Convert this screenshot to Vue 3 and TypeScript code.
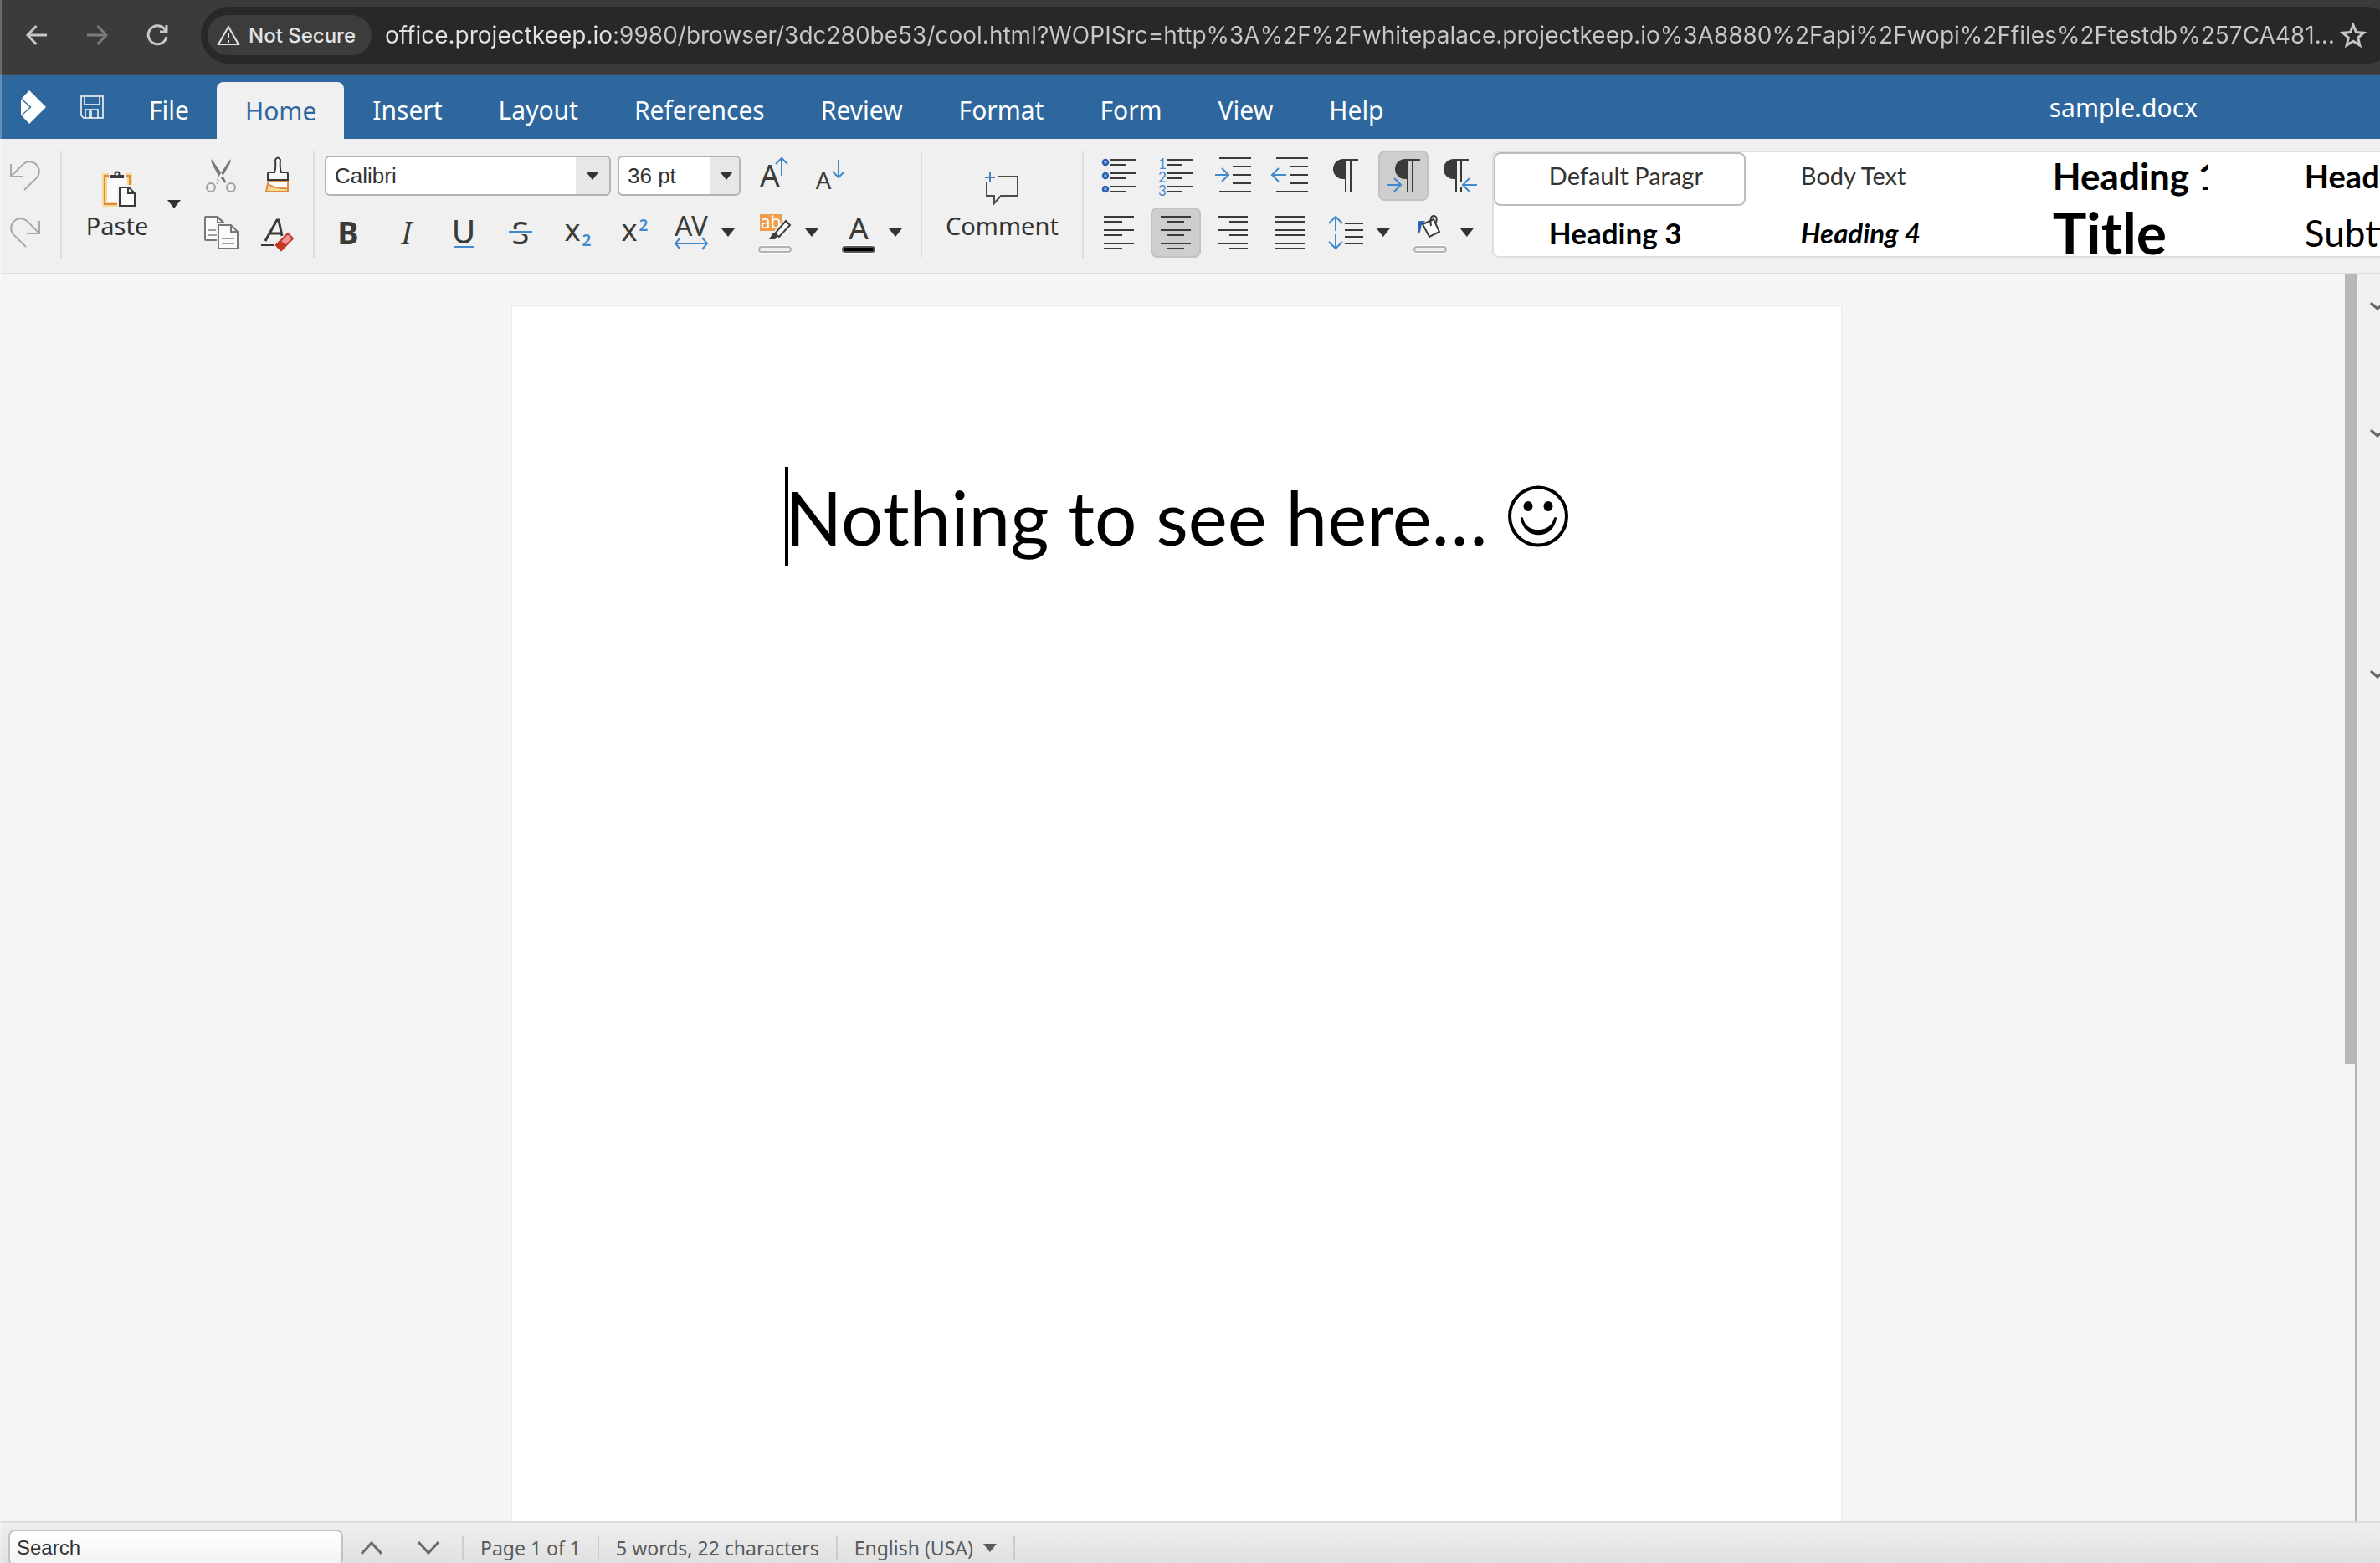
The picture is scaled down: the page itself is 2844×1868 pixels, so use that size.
<script setup lang="ts">
import { ref } from 'vue'

interface Tool {
  id: string
  label: string
  active?: boolean
  menu?: boolean
}

interface StylePreset {
  name: string
  kind: string
  selected?: boolean
}

const address = ref(
  'office.projectkeep.io:9980/browser/3dc280be53/cool.html?WOPISrc=http%3A%2F%2Fwhitepalace.projectkeep.io%3A8880%2Fapi%2Fwopi%2Ffiles%2Ftestdb%257CA481…'
)
const search = ref('')
const activeTab = ref('Home')

const tabs: string[] = ['File', 'Home', 'Insert', 'Layout', 'References', 'Review', 'Format', 'Form', 'View', 'Help']

const dark = 'stroke="#3a3a38" stroke-width="2"'
const blue = 'stroke="#4189cc" stroke-width="2"'
const pilcrow = (x: number): string =>
  `<path d="M${x + 16} 10H${x + 12}A12 12 0 0 0 ${x + 12} 34H${x + 16}Z" fill="#3a3a38"/>` +
  `<path d="M${x + 12} 11H${x + 30}M${x + 15} 11V50M${x + 21} 11V50" ${dark}/>`
const swatch = (fill: string, stroke: string): string =>
  `<rect x="9" y="45" width="42" height="10" rx="5" fill="#fff"/>` +
  `<rect x="11" y="47" width="38" height="6" rx="3" fill="${fill}" stroke="${stroke}" stroke-width="2"/>`

const icons: Record<string, string> = {
  undo: '<path d="M13 16V31H28M13 31L27.9 15.9A11.5 11.5 0 0 1 44.1 32.1L29 47" stroke="#a9a9a9" stroke-width="2"/>',
  redo: '<path d="M47 16V31H32M47 31L32.1 15.9A11.5 11.5 0 0 0 15.9 32.1L31 47" stroke="#a9a9a9" stroke-width="2"/>',
  cut: '<circle cx="18" cy="44" r="5" stroke="#a0a0a0" stroke-width="2"/><circle cx="42" cy="44" r="5" stroke="#a0a0a0" stroke-width="2"/><path d="M18 10L19 15L27 30L24 39L26 39L30 33L35 39L36 37L32 29L21 13Z M42 10L41 15L33 29L30 33L26 40L24 39L28 30L39 13Z" fill="#787878"/><circle cx="30" cy="30" r="1.5" fill="#f0f0f0"/>',
  brush: '<path d="M27 11Q30 6 33 11Q32 20 34 26H40Q42 26 42 28V35H18V28Q18 26 20 26H26Q28 20 27 11Z" fill="#fafafa" stroke="#3a3a38" stroke-width="2"/><path d="M17 35H43" stroke="#3a3a38" stroke-width="2"/><path d="M19 37H42V49H16Z" fill="#fff"/><path d="M18 40Q28 46 42 45V49H16Z" fill="#f3d991"/><path d="M18.500 37H42V49H16ZM18 40Q28 46 42 45" stroke="#e08b45" stroke-width="2"/>',
  copy: '<path d="M25 39H12Q11 39 11 38V12Q11 11 12 11H26L33 18H26V11" fill="#fafafa" stroke="#787878" stroke-width="2"/><path d="M15 27H25M15 33H25" stroke="#a0a0a0" stroke-width="2"/><path d="M24 19H43V30H24Z" fill="#f0f0f0"/><path d="M27 21H42L50 29V49H27Z" fill="#fafafa" stroke="#787878" stroke-width="2"/><path d="M42 21V29H50" stroke="#787878" stroke-width="2"/><path d="M31 37H46M31 43H46" stroke="#a0a0a0" stroke-width="2"/><path d="M11 11H26L33 18" stroke="#787878" stroke-width="2"/>',
  clear: '<path d="M15 40L29 15H31L35 34M20 31H34" stroke="#3a3a38" stroke-width="3"/><path d="M10 45H25" stroke="#3a3a38" stroke-width="2"/><path d="M42 31L48 37L34 51L28 45Z" fill="#f0949a" stroke="#c43825" stroke-width="2"/><path d="M33 40L39 46L34 51L28 45Z" fill="#c43825" stroke="#c43825" stroke-width="2"/>',
  grow: `<text x="27" y="44" text-anchor="middle" font-size="38" fill="#3a3a38">A</text><path d="M41 30V9M34 16L41 9L48 16" ${blue}/>`,
  shrink: `<text x="23" y="46" text-anchor="middle" font-size="29" fill="#3a3a38">A</text><path d="M41 11V32M34 25L41 32L48 25" ${blue}/>`,
  bold: '<text x="28" y="44" text-anchor="middle" font-size="38" font-weight="700" fill="#3a3a38">B</text>',
  italic: '<text x="30" y="44" text-anchor="middle" font-size="38" font-style="italic" fill="#3a3a38">I</text>',
  underline: `<text x="30" y="43" text-anchor="middle" font-size="38" style="font-family:Lato,sans-serif" fill="#3a3a38">U</text><path d="M18 47H42" ${blue}/>`,
  strike: `<text x="30" y="44" text-anchor="middle" font-size="38" fill="#3a3a38">S</text><path d="M16 29H44" stroke="#f0f0f0" stroke-width="6"/><path d="M16 29H44" ${blue}/>`,
  sub: '<text x="24" y="40" text-anchor="middle" font-size="36" fill="#3a3a38">x</text><text x="41" y="46" text-anchor="middle" font-size="19" font-weight="600" fill="#4189cc">2</text>',
  sup: '<text x="24" y="40" text-anchor="middle" font-size="36" fill="#3a3a38">x</text><text x="41" y="28" text-anchor="middle" font-size="19" font-weight="600" fill="#4189cc">2</text>',
  spacing: `<text x="30" y="34" text-anchor="middle" font-size="33" fill="#3a3a38">AV</text><path d="M11 43H49M17 36L11 43L17 50M43 36L49 43L43 50" ${blue}/>`,
  highlight: '<rect x="12" y="8" width="26" height="20" fill="#ef9d4f"/><text x="25" y="25" text-anchor="middle" font-size="21" fill="#fff">ab</text><path d="M43 16L49 21L36 36L30 31Z" fill="#fafafa" stroke="#f0f0f0" stroke-width="5"/><path d="M43 16L48 21L35 35L30 31Z" fill="#fafafa" stroke="#3a3a38" stroke-width="2"/><path d="M28 30L33 35L30 38L23 38Z" fill="#3a3a38"/>' + swatch('#f0f0f0', '#b3b3b3'),
  color: '<text x="30" y="38" text-anchor="middle" font-size="37" fill="#3a3a38">A</text>' + swatch('#000', '#555'),
  bullets: [14, 30, 46].map(y => `<circle cx="14" cy="${y}" r="3" fill="#8fb4e6" stroke="#2a5fb2" stroke-width="2.500"/><path d="M20 ${y - 3}H50M20 ${y + 3}H38" ${dark}/>`).join(''),
  numbers: [14, 30, 46].map((y, i) => `<text x="14" y="${y + 8}" text-anchor="middle" font-size="17" style="font-family:Lato,sans-serif" fill="#4189cc">${i + 1}</text><path d="M20 ${y - 3}H50M20 ${y + 3}H38" ${dark}/>`).join(''),
  indent: `<path d="M14 9H52M30 19H52M30 29H52M30 39H52M14 49H52" ${dark}/><path d="M9 29H26M17 21L25 29L17 37" ${blue}/>`,
  outdent: `<path d="M14 9H52M30 19H52M30 29H52M30 39H52M14 49H52" ${dark}/><path d="M8 29H26M17 21L9 29L17 37" ${blue}/>`,
  marks: pilcrow(14),
  ltr: pilcrow(20) + `<path d="M28 41L18 31V51Z" fill="#cecece"/><path d="M10 41H27M19 33L27 41L19 49" ${blue}/>`,
  rtl: pilcrow(10) + `<path d="M30 38H33V44H30Z" fill="#f0f0f0"/><path d="M33 41H50M41 33L33 41L41 49" ${blue}/>`,
  left: `<path d="M12 11H48M12 17H34M12 27H48M12 33H34M12 43H48M12 49H34" ${dark}/>`,
  center: `<path d="M12 11H48M20 17H40M12 27H48M20 33H40M12 43H48M20 49H40" ${dark}/>`,
  right: `<path d="M12 11H48M26 17H48M12 27H48M26 33H48M12 43H48M26 49H48" ${dark}/>`,
  justify: `<path d="M12 11H48M12 17H48M12 27H48M12 33H48M12 43H48M12 49H48" ${dark}/>`,
  lines: `<path d="M28 19H50M28 27H50M28 35H50M28 43H50" ${dark}/><path d="M17 28V11M9 19L17 11L25 19M17 32V49M9 41L17 49L25 41" ${blue}/>`,
  fill: '<path d="M15 33V19Q15 16 18 16H24L20 20L18 29Z" fill="#2a62b5"/><path d="M21 20L34 14L41 29L29 35Z" fill="#fafafa" stroke="#3a3a38" stroke-width="2"/><path d="M31 22Q29 9 35 10Q39 11 37 18" stroke="#3a3a38" stroke-width="2"/>' + swatch('#f0f0f0', '#b3b3b3')
}

const fontTools: Tool[] = [
  { id: 'bold', label: 'Bold' },
  { id: 'italic', label: 'Italic' },
  { id: 'underline', label: 'Underline' },
  { id: 'strike', label: 'Strikethrough' },
  { id: 'sub', label: 'Subscript' },
  { id: 'sup', label: 'Superscript' },
  { id: 'spacing', label: 'Character spacing', menu: true },
  { id: 'highlight', label: 'Highlighting', menu: true },
  { id: 'color', label: 'Font color', menu: true }
]
const sizeTools: Tool[] = [
  { id: 'grow', label: 'Increase size' },
  { id: 'shrink', label: 'Decrease size' }
]
const listTools: Tool[] = [
  { id: 'bullets', label: 'Bullets' },
  { id: 'numbers', label: 'Numbering' },
  { id: 'indent', label: 'Increase indent' },
  { id: 'outdent', label: 'Decrease indent' },
  { id: 'marks', label: 'Formatting marks' },
  { id: 'ltr', label: 'Left to right', active: true },
  { id: 'rtl', label: 'Right to left' }
]
const alignTools: Tool[] = [
  { id: 'left', label: 'Align left' },
  { id: 'center', label: 'Center', active: true },
  { id: 'right', label: 'Align right' },
  { id: 'justify', label: 'Justified' },
  { id: 'lines', label: 'Line spacing', menu: true },
  { id: 'fill', label: 'Paragraph background', menu: true }
]
const clipRows: Tool[][] = [
  [{ id: 'cut', label: 'Cut' }, { id: 'brush', label: 'Clone formatting' }],
  [{ id: 'copy', label: 'Copy' }, { id: 'clear', label: 'Clear formatting' }]
]
const historyRows: Tool[][] = [[{ id: 'undo', label: 'Undo' }], [{ id: 'redo', label: 'Redo' }]]
const paragraphRows: Tool[][] = [listTools, alignTools]

const presetRows: StylePreset[][] = [
  [
    { name: 'Default Paragraph', kind: 'plain', selected: true },
    { name: 'Body Text', kind: 'plain' },
    { name: 'Heading 1', kind: 'h1' },
    { name: 'Heading 2', kind: 'h2' }
  ],
  [
    { name: 'Heading 3', kind: 'h3' },
    { name: 'Heading 4', kind: 'h4' },
    { name: 'Title', kind: 'title' },
    { name: 'Subtitle', kind: 'subtitle' }
  ]
]
</script>

<template>
  <div class="window">
    <header class="browser">
      <button class="nav" aria-label="Back">
        <svg width="28" height="28" viewBox="0 0 28 28"><path d="M26 14H4M13.500 3L3 14L13.500 25" /></svg>
      </button>
      <button class="nav dim" aria-label="Forward">
        <svg width="28" height="28" viewBox="0 0 28 28"><path d="M2 14H24M14.500 3L25 14L14.500 25" /></svg>
      </button>
      <button class="nav" aria-label="Reload">
        <svg width="28" height="28" viewBox="0 0 28 28"><path d="M25 16A11 11 0 1 1 22 6L25 9M25 2V10H17" /></svg>
      </button>
      <div class="omnibox">
        <button class="secure">
          <svg width="28" height="26" viewBox="0 0 28 26"><path d="M14 3L26 24H2ZM14 10V17M14 19V22" /></svg>
          Not Secure
        </button>
        <input v-model="address" class="address" aria-label="Address" />
        <button class="star" aria-label="Bookmark">
          <svg width="32" height="32" viewBox="0 0 32 32"><path d="M16 4L19.500 12.500L28.500 13.200L21.700 19L23.800 28L16 23.200L8.200 28L10.300 19L3.500 13.200L12.500 12.500Z" /></svg>
        </button>
      </div>
    </header>

    <nav class="menubar">
      <a class="logo" href="#" aria-label="Start">
        <svg width="32" height="40" viewBox="0 0 32 40"><path d="M11 0L31 20L11 40L2 30.500L13.500 20L2 9.500ZM1 10.500L11.500 20L1 30Z" fill="#fff" /></svg>
      </a>
      <button class="save" aria-label="Save">
        <svg width="28" height="28" viewBox="0 0 28 28"><path d="M1 1H27V27H4L1 24ZM5 1V11H23V1M6 27V17H21V27M11 27V19H13V27" /></svg>
      </button>
      <div class="tabs" role="tablist">
        <button v-for="tab in tabs" :key="tab" role="tab" class="tab" :class="{ current: tab === activeTab }" :aria-selected="tab === activeTab" @click="activeTab = tab">{{ tab }}</button>
      </div>
      <span class="docname">sample.docx</span>
    </nav>

    <section class="ribbon">
      <div class="group">
        <div class="rows">
          <div v-for="(row, r) in historyRows" :key="r" class="row">
            <button v-for="t in row" :key="t.id" class="tool" :aria-label="t.label"><svg class="icon" viewBox="0 0 60 60" v-html="icons[t.id]" /></button>
          </div>
        </div>
      </div>
      <div class="group">
        <div class="paste">
          <button class="big">
            <svg class="bigicon" viewBox="0 0 48 48">
              <path d="M9 6H39V40H9Z" fill="#fafafa" stroke="#f3d991" stroke-width="6" />
              <path d="M9 6H39V40H9Z" stroke="#e08b45" stroke-width="2" />
              <path d="M14 3H34V9H14Z" fill="#f0f0f0" />
              <path d="M16 5H32V9H16Z" fill="#3a3a38" />
              <circle cx="24" cy="4" r="2.500" fill="#f0f0f0" stroke="#3a3a38" stroke-width="2" />
              <path d="M24 17H42V46H24Z" fill="#f0f0f0" />
              <path d="M27 20H38L45 27V42H27Z" fill="#fafafa" stroke="#3a3a38" stroke-width="2" />
              <path d="M37 20V27H45" stroke="#3a3a38" stroke-width="2" />
            </svg>
            Paste
          </button>
          <button class="drop" aria-label="Paste options"><i class="tri" /></button>
        </div>
        <div class="rows">
          <div v-for="(row, r) in clipRows" :key="r" class="row">
            <button v-for="t in row" :key="t.id" class="tool" :aria-label="t.label"><svg class="icon" viewBox="0 0 60 60" v-html="icons[t.id]" /></button>
          </div>
        </div>
      </div>
      <div class="group">
        <div class="rows">
          <div class="row">
            <span class="combo font">
              <select aria-label="Font name"><option>Calibri</option></select>
              <span class="combo-arrow"><i class="tri" /></span>
            </span>
            <span class="combo size">
              <select aria-label="Font size"><option>36 pt</option></select>
              <span class="combo-arrow"><i class="tri" /></span>
            </span>
            <button v-for="t in sizeTools" :key="t.id" class="tool" :aria-label="t.label"><svg class="icon" viewBox="0 0 60 60" v-html="icons[t.id]" /></button>
          </div>
          <div class="row">
            <div v-for="t in fontTools" :key="t.id" class="split">
              <button class="tool" :aria-label="t.label"><svg class="icon" viewBox="0 0 60 60" v-html="icons[t.id]" /></button>
              <button v-if="t.menu" class="drop" :aria-label="t.label + ' options'"><i class="tri" /></button>
            </div>
          </div>
        </div>
      </div>
      <div class="group">
        <button class="big">
          <svg class="bigicon" viewBox="0 0 48 48">
            <path d="M20 7H43V30H23L15 39V30H6V13" stroke="#4b4b4b" stroke-width="2" />
            <path d="M4 8H16M10 2V14" stroke="#4a7fc0" stroke-width="2" />
          </svg>
          Comment
        </button>
      </div>
      <div class="group last">
        <div class="rows">
          <div v-for="(row, r) in paragraphRows" :key="r" class="row">
            <div v-for="t in row" :key="t.id" class="split">
              <button class="tool" :class="{ active: t.active }" :aria-label="t.label"><svg class="icon" viewBox="0 0 60 60" v-html="icons[t.id]" /></button>
              <button v-if="t.menu" class="drop" :aria-label="t.label + ' options'"><i class="tri" /></button>
            </div>
          </div>
        </div>
      </div>
      <div class="presets">
        <div v-for="(row, r) in presetRows" :key="r" class="preset-row">
          <button v-for="p in row" :key="p.name" class="preset" :class="{ selected: p.selected }">
            <span class="preset-name" :class="p.kind">{{ p.name }}</span>
          </button>
        </div>
      </div>
    </section>

    <div class="workspace">
      <main class="canvas">
        <article class="page">
          <p class="line">
            <i class="caret" />
            <span>Nothing to see here…</span>
            <svg class="smiley" width="72" height="74" viewBox="0 0 72 74" role="img" aria-label="Smiling face">
              <ellipse cx="36" cy="37" rx="34" ry="34.500" stroke="#000" stroke-width="4" />
              <ellipse cx="24" cy="25" rx="5.500" ry="6" fill="#000" />
              <ellipse cx="48" cy="25" rx="5.500" ry="6" fill="#000" />
              <path d="M15 39Q16 37 18 39C21 58 51 58 55 39Q57 37 58 39C55 66 18 66 15 39Z" fill="#000" />
            </svg>
          </p>
        </article>
        <div class="track"><div class="thumb" /></div>
      </main>
      <aside class="sidebar">
        <button v-for="n in 3" :key="n" class="fold" :class="'fold-' + n" aria-label="Toggle panel">
          <svg width="20" height="12" viewBox="0 0 20 12"><path d="M2 2L10 9L18 2" /></svg>
        </button>
      </aside>
    </div>

    <footer class="statusbar">
      <input v-model="search" class="search" placeholder="Search" aria-label="Search" />
      <button class="step" aria-label="Previous"><svg width="28" height="20" viewBox="0 0 28 20"><path d="M2 17L14 4L26 17" /></svg></button>
      <button class="step" aria-label="Next"><svg width="28" height="20" viewBox="0 0 28 20"><path d="M2 3L14 16L26 3" /></svg></button>
      <span class="cell">Page 1 of 1</span>
      <span class="cell">5 words, 22 characters</span>
      <button class="cell lang">English (USA)<i class="tri" /></button>
      <span class="cell" />
    </footer>
  </div>
</template>

<style>
html,
body {
  overflow: hidden;
}
</style>

<style scoped>
.window {
  position: relative;
  display: flex;
  flex-direction: column;
  height: 100vh;
  overflow: hidden;
  background: #f5f5f5;
  color: #333;
  font-family: 'Noto Sans', sans-serif;
}
.window::before {
  content: '';
  position: absolute;
  inset: 0 auto 0 0;
  width: 2px;
  background: rgba(255, 255, 255, 0.25);
  z-index: 2;
}
* {
  box-sizing: border-box;
}
button {
  padding: 0;
  border: 0;
  background: none;
  color: inherit;
  font: inherit;
  cursor: pointer;
}
svg {
  display: block;
  fill: none;
}

/* Browser chrome */
.browser {
  display: flex;
  flex: none;
  align-items: flex-start;
  height: 90px;
  padding: 8px 0 0 30px;
  overflow: hidden;
  border-bottom: 2px solid #4a4a4a;
  background: #3b3b3b;
}
.nav {
  display: flex;
  align-items: center;
  height: 68px;
  margin-right: 44px;
}
.nav svg {
  stroke: #c7c7c7;
  stroke-width: 3;
}
.nav.dim svg {
  stroke: #7c7c7c;
}
.nav:nth-child(3) {
  margin-right: 38px;
}
.omnibox {
  display: flex;
  flex: 1;
  align-items: center;
  height: 68px;
  margin-right: -18px;
  padding: 0 34px 0 8px;
  border-radius: 34px;
  background: #282828;
}
.secure {
  display: flex;
  flex: none;
  align-items: center;
  gap: 10px;
  width: 196px;
  height: 48px;
  padding-left: 11px;
  border-radius: 24px;
  background: #3c3c3c;
  color: #e3e3e3;
  font: 500 24px Inter, sans-serif;
}
.secure svg {
  stroke: #e3e3e3;
  stroke-width: 2;
}
.address {
  flex: 1;
  min-width: 0;
  height: 48px;
  padding: 0;
  margin-left: 16px;
  border: 0;
  outline: 0;
  background: linear-gradient(90deg, #e3e3e3 271px, #c7c7c7 271px);
  background-clip: text;
  -webkit-text-fill-color: transparent;
  font: 28px Inter, sans-serif;
}
.star svg {
  stroke: #c7c7c7;
  stroke-width: 3;
}

/* Menu bar */
.menubar {
  display: flex;
  flex: none;
  align-items: center;
  height: 76px;
  padding: 0 218px 0 24px;
  background: #2e679e;
  color: #fff;
  font-size: 30px;
}
.save {
  margin: 0 20px 0 40px;
}
.save svg {
  stroke: #fff;
  stroke-width: 1.5;
}
.tabs {
  display: flex;
  align-self: flex-end;
  height: 68px;
}
.tab {
  padding: 0 33px 2px 34px;
  border-radius: 8px 8px 0 0;
}
.tab.current {
  padding-bottom: 0;
  background: #f0f0f0;
  color: #2e679e;
}
.docname {
  margin-left: auto;
}

/* Ribbon */
.ribbon {
  display: flex;
  flex: none;
  height: 162px;
  padding-top: 14px;
  overflow: hidden;
  border-bottom: 2px solid #dedede;
  background: #f0f0f0;
}
.group {
  display: flex;
  flex: none;
  gap: 8px;
  height: 128px;
  padding-right: 12px;
  margin-right: 12px;
  border-right: 2px solid #dcdcdc;
}
.group.last {
  margin-right: -4px;
  border-right: 0;
}
.rows {
  display: flex;
  flex-direction: column;
  gap: 8px;
}
.row {
  display: flex;
  align-items: center;
  gap: 8px;
  height: 60px;
}
.split,
.paste {
  display: flex;
}
.tool {
  width: 60px;
  height: 60px;
  border-radius: 8px;
}
.tool.active {
  background: #cecece;
  box-shadow: inset 0 0 0 2px #c2c2c2;
}
.icon {
  width: 60px;
  height: 60px;
  font-family: 'Noto Sans', sans-serif;
}
.drop {
  display: flex;
  align-items: center;
  width: 32px;
  padding-left: 6px;
}
.tri {
  display: block;
  width: 16px;
  height: 10px;
  background: #333;
  clip-path: polygon(0 0, 100% 0, 50% 100%);
}
.big {
  display: flex;
  flex-direction: column;
  align-items: center;
  min-width: 108px;
  padding: 24px 16px 0;
  font-size: 29px;
  line-height: 36px;
}
.bigicon {
  width: 48px;
  height: 48px;
}
.combo {
  position: relative;
  height: 48px;
}
.combo.font {
  width: 342px;
}
.combo.size {
  width: 147px;
}
.combo select {
  width: 100%;
  height: 100%;
  padding: 0 10px;
  border: 2px solid #b3b3b3;
  border-radius: 6px;
  outline: 0;
  background: #fff;
  color: #333;
  font: 26px 'Liberation Sans', sans-serif;
  appearance: none;
}
.combo-arrow {
  position: absolute;
  top: 2px;
  right: 2px;
  bottom: 2px;
  display: flex;
  align-items: center;
  justify-content: center;
  width: 40px;
  border-radius: 0 4px 4px 0;
  background: #e7e7e7;
  pointer-events: none;
}
.combo.size .combo-arrow {
  width: 34px;
  padding-left: 4px;
}

/* Paragraph style gallery */
.presets {
  flex: 1;
  min-width: 0;
  height: 128px;
  overflow: hidden;
  border: 2px solid #dedede;
  border-right: 0;
  border-radius: 8px 0 0 8px;
  background: #fff;
}
.preset-row {
  display: flex;
}
.preset {
  display: flex;
  flex: none;
  align-items: center;
  width: 301px;
  height: 64px;
  padding: 0 48px 8px 64px;
  border: 2px solid transparent;
  border-radius: 8px;
}
.preset-row + .preset-row .preset {
  padding-bottom: 0;
}
.preset.selected {
  border-color: #bcbcb9;
}
.preset-name {
  flex: 1;
  overflow: hidden;
  color: #000;
  font-family: Lato, sans-serif;
  line-height: 64px;
  text-align: left;
  white-space: nowrap;
}
.plain {
  color: #333;
  font-size: 29px;
}
.h1 {
  font-size: 44px;
  font-weight: 700;
}
.h2 {
  font-size: 38px;
  font-weight: 700;
}
.h3 {
  font-size: 35px;
  font-weight: 700;
}
.h4 {
  font-size: 33px;
  font-style: italic;
  font-weight: 700;
}
.title {
  font-size: 68px;
  font-weight: 700;
}
.subtitle {
  font-size: 44px;
}

/* Document area */
.workspace {
  display: flex;
  flex: 1;
  min-height: 0;
}
.canvas {
  position: relative;
  display: flex;
  flex: 1;
  justify-content: center;
  padding: 37px 4px 0 0;
}
.page {
  width: 1590px;
  max-width: 90%;
  padding-top: 192px;
  border: 1px solid #ebebeb;
  border-bottom: 0;
  background: #fff;
}
.line {
  display: flex;
  align-items: center;
  justify-content: center;
  height: 118px;
  margin: 0;
  color: #000;
  font: 89px Lato, sans-serif;
}
.caret {
  width: 4px;
  height: 118px;
  margin-right: -4px;
  background: #000;
}
.smiley {
  margin-left: 24px;
}
.track {
  position: absolute;
  top: 0;
  right: 0;
  bottom: 0;
  width: 14px;
  border-right: 2px solid #b5b5b5;
}
.thumb {
  height: 944px;
  background: #b8b8ba;
}
.sidebar {
  position: relative;
  width: 28px;
  overflow: hidden;
  background: #f0f0f0;
}
.fold {
  display: block;
  height: 12px;
  margin-left: 15px;
}
.fold svg {
  stroke: #666;
  stroke-width: 3;
}
.fold-1 {
  margin-top: 32px;
}
.fold-2 {
  margin-top: 140px;
}
.fold-3 {
  margin-top: 276px;
}

/* Status bar */
.statusbar {
  display: flex;
  flex: none;
  align-items: flex-start;
  height: 50px;
  padding: 8px 0 0 10px;
  overflow: hidden;
  border-top: 2px solid #dcdcdc;
  background: linear-gradient(#efefef, #e0e0e0);
  color: #5a5a5a;
  font-size: 23px;
}
.search {
  width: 400px;
  height: 44px;
  padding: 0 8px;
  border: 2px solid #c2c2c2;
  border-radius: 8px;
  outline: 0;
  background: linear-gradient(#fff, #f2f2f2);
  color: #333;
  font: 24px 'Liberation Sans', sans-serif;
}
.search::placeholder {
  color: #333;
  opacity: 1;
}
.step {
  height: 44px;
  margin-left: 20px;
}
.step + .step {
  margin: 0 26px 0 40px;
}
.step svg {
  stroke: #6a6a6a;
  stroke-width: 3;
}
.cell {
  display: flex;
  align-items: center;
  height: 28px;
  margin-top: 8px;
  padding: 0 20px;
  border-left: 2px solid #cdcdcd;
}
.lang {
  gap: 12px;
}
.lang .tri {
  background: #5a5a5a;
}
</style>
